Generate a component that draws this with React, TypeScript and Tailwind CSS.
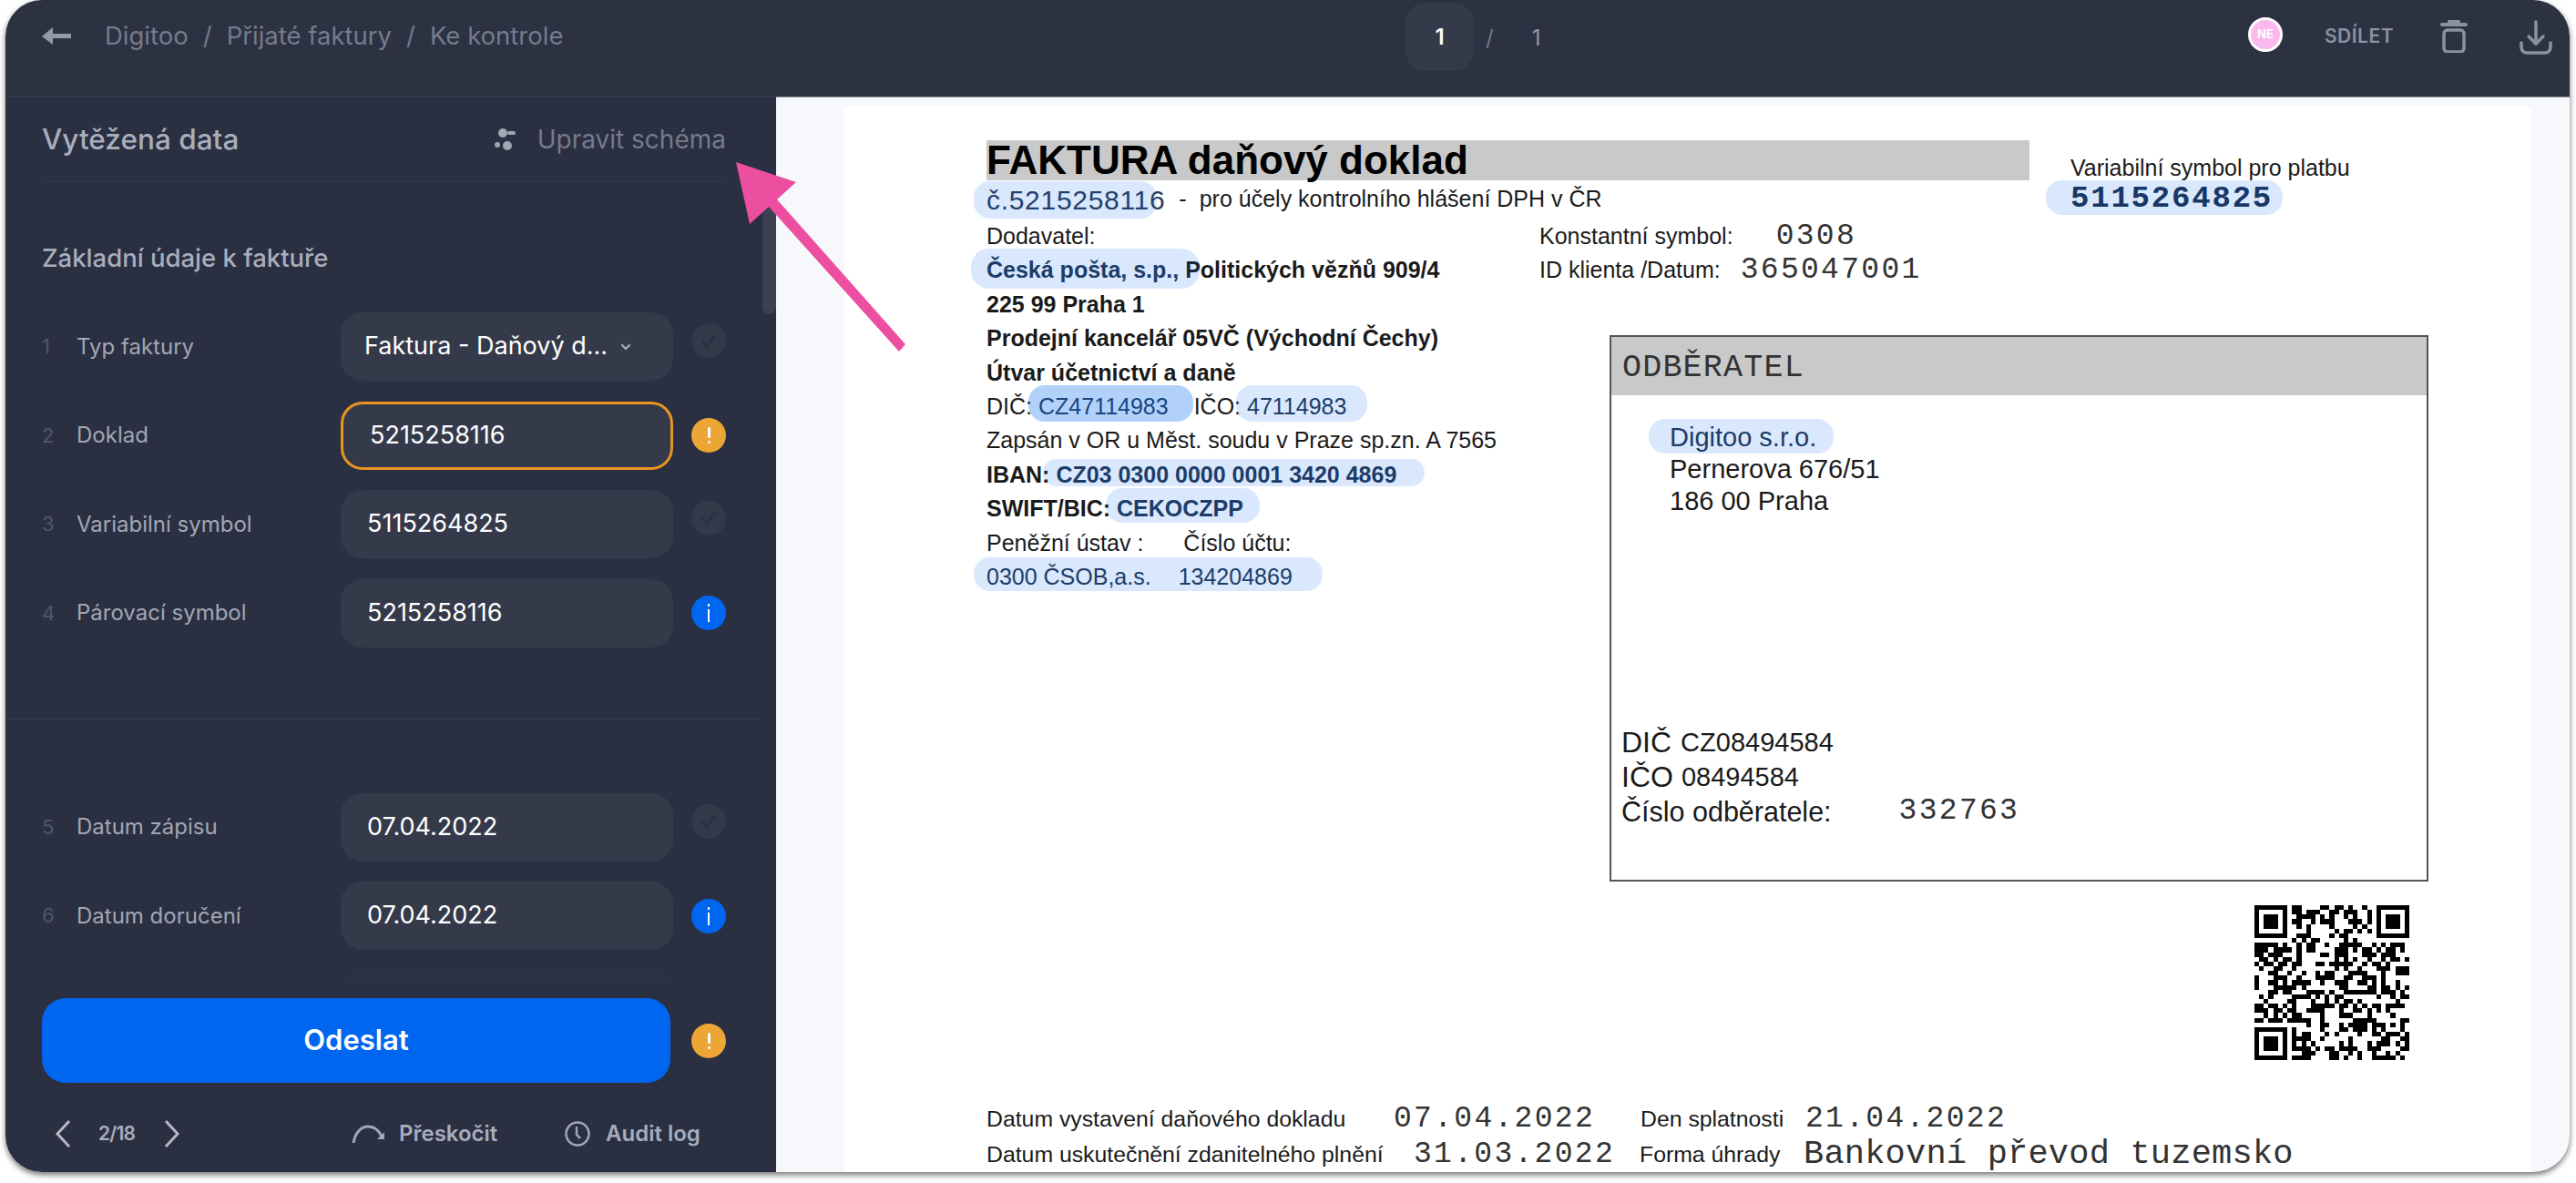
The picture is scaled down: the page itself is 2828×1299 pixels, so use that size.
import React from 'react';
import { ChevronDown } from 'lucide-react';

type Status = 'check' | 'warn' | 'info';

const rowsTop: { n: number; label: string; value: string; status: Status; select?: boolean; active?: boolean }[] = [
  { n: 1, label: 'Typ faktury', value: 'Faktura - Daňový d...', status: 'check', select: true },
  { n: 2, label: 'Doklad', value: '5215258116', status: 'warn', active: true },
  { n: 3, label: 'Variabilní symbol', value: '5115264825', status: 'check' },
  { n: 4, label: 'Párovací symbol', value: '5215258116', status: 'info' },
];

const rowsBottom: { n: number; label: string; value: string; status: Status }[] = [
  { n: 5, label: 'Datum zápisu', value: '07.04.2022', status: 'check' },
  { n: 6, label: 'Datum doručení', value: '07.04.2022', status: 'info' },
];

const StatusDot = ({ status }: { status: Status }) => {
  if (status === 'check') {
    return (
      <div className="w-[38px] h-[38px] mb-[13px] rounded-full bg-[#343949] flex items-center justify-center shrink-0">
        <svg width="22" height="22" viewBox="0 0 22 22" fill="none" stroke="#2a2f42" strokeWidth="3">
          <path d="M4 11l5 6 9-12" />
        </svg>
      </div>
    );
  }
  if (status === 'warn') {
    return (
      <div className="w-[38px] h-[38px] rounded-full bg-[#eda535] flex flex-col items-center justify-center gap-[3px] shrink-0">
        <div className="w-[3px] h-[12px] rounded-sm bg-white" />
        <div className="w-[3px] h-[3px] rounded-full bg-white" />
      </div>
    );
  }
  return (
    <div className="w-[38px] h-[38px] rounded-full bg-[#0066f0] flex flex-col items-center justify-center gap-[3px] shrink-0">
      <div className="w-[2px] h-[3px] bg-white" />
      <div className="w-[2px] h-[14px] bg-white" />
    </div>
  );
};

const FieldRow = ({ n, label, value, status, select, active }: { n: number; label: string; value: string; status: Status; select?: boolean; active?: boolean }) => (
  <div className="flex items-center h-[75px] pl-[40px]">
    <span className="w-[38px] text-[22px] text-[#515767]">{n}</span>
    <span className="w-[290px] text-[24px] text-[#a2a7b4]">{label}</span>
    <div className={`w-[365px] h-[75px] rounded-[24px] bg-[#353a4a] flex items-center text-[27px] text-white ${select ? 'pl-[26px]' : 'pl-[29px]'} ${active ? 'border-[3px] border-[#e8951f] pl-[26px]' : ''}`}>
      <span>{value}</span>
      {select && <ChevronDown size={16} strokeWidth={3.5} className="ml-[12px] text-[#a2a7b4]" />}
    </div>
    <div className="ml-[20px]">
      <StatusDot status={status} />
    </div>
  </div>
);

const HeaderBar = () => (
  <header className="h-[106px] bg-[#2c3242] border-b border-[#3a4050] flex items-start shrink-0">
    <div className="w-[1537px] h-[80px] pl-[40px] flex items-center text-[27.5px] text-[#747b8c]">
      <svg width="32" height="22" viewBox="0 0 32 22" fill="#9299a8">
        <path d="M0 11L12 1v7h20v5H12v7z" />
      </svg>
      <span className="ml-[37px]">Digitoo</span>
      <span className="mx-[16px]">/</span>
      <span>Přijaté faktury</span>
      <span className="mx-[16px]">/</span>
      <span>Ke kontrole</span>
    </div>
    <div className="mt-[3px] w-[75px] h-[75px] rounded-[22px] bg-[#353a4a] flex items-center justify-center text-[24px] font-semibold text-white">1</div>
    <span className="mt-[24px] ml-[13px] text-[24px] text-[#747b8c]">/</span>
    <span className="mt-[24px] ml-[42px] text-[24px] text-[#9299a8]">1</span>
    <div className="ml-auto mt-[19px] flex items-start pr-[19px]">
      <div className="w-[38px] h-[38px] rounded-full border-[3px] border-white bg-[#f9b8ee] flex items-center justify-center text-[13px] font-bold text-white">NE</div>
      <span className="ml-[46px] mt-[5px] text-[21px] font-semibold text-[#8a91a0] tracking-[0.5px]">SDÍLET</span>
      <svg className="ml-[50px] mt-[3px]" width="32" height="36" viewBox="0 0 32 36" fill="none">
        <rect x="9" y="0" width="14" height="4" rx="1.5" fill="#8a91a0" />
        <rect x="1" y="3" width="30" height="4" rx="2" fill="#8a91a0" />
        <rect x="5" y="11" width="22" height="24" rx="4" stroke="#8a91a0" strokeWidth="3.5" />
      </svg>
      <svg className="ml-[56px] mt-[3px]" width="36" height="38" viewBox="0 0 36 38" fill="none" stroke="#8a91a0" strokeWidth="3.5" strokeLinecap="round" strokeLinejoin="round">
        <path d="M18 2v24" />
        <path d="M10 18l8 8 8-8" />
        <path d="M2 25v5a6 6 0 0 0 6 6h20a6 6 0 0 0 6-6v-5" />
      </svg>
    </div>
  </header>
);

const Sidebar = () => (
  <aside className="w-[846px] h-full shrink-0 bg-[#2a2f42] flex flex-col font-['Inter',sans-serif]">
    <div className="ml-[40px] mr-[55px] h-[94px] border-b border-[#343949] flex items-center justify-between shrink-0">
      <h2 className="text-[31.5px] font-medium text-[#a9aeba]">Vytěžená data</h2>
      <div className="flex items-center text-[28px] text-[#747b8c]">
        <svg width="24" height="24" viewBox="0 0 24 24" fill="#a2a7b4">
          <circle cx="10" cy="5" r="5" />
          <rect x="15" y="3" width="9" height="4" rx="2" />
          <circle cx="15" cy="19" r="5" />
          <circle cx="4" cy="18" r="3" />
        </svg>
        <span className="ml-[24px]">Upravit schéma</span>
      </div>
    </div>
    <div className="relative flex-1 min-h-0 overflow-hidden">
      <h3 className="pl-[40px] pt-[65px] h-[143px] text-[27.5px] leading-[36px] font-medium text-[#a9aeba]">Základní údaje k faktuře</h3>
      <div className="flex flex-col gap-[22.5px]">
        {rowsTop.map(r => <FieldRow key={r.n} {...r} />)}
      </div>
      <div className="mt-[78px] mr-[15px] border-t border-[#353a4a]" />
      <div className="mt-[81px] flex flex-col gap-[22.5px]">
        {rowsBottom.map(r => <FieldRow key={r.n} {...r} />)}
        <div className="ml-[368px] w-[365px] h-[75px] rounded-[24px] bg-[#353a4a]" />
      </div>
      <div className="absolute right-0 top-[15px] w-[15px] h-[130px] rounded-b-lg bg-[#3b4152]" />
      <div className="absolute left-0 right-0 bottom-0 h-[34px] bg-gradient-to-b from-[#2a2f42]/70 to-[#2a2f42]" />
    </div>
    <div className="h-[200px] shrink-0 pl-[40px] pt-[9px]">
      <div className="flex items-center">
        <button className="w-[690px] h-[93px] rounded-[26px] bg-[#0066f0] text-[31px] font-semibold text-white">Odeslat</button>
        <div className="ml-[23px]">
          <StatusDot status="warn" />
        </div>
      </div>
      <div className="mt-[38px] flex items-center text-[24px] font-semibold text-[#a6adbd]">
        <svg className="ml-[14px]" width="18" height="32" viewBox="0 0 18 32" fill="none" stroke="#b5b9c3" strokeWidth="3">
          <path d="M16 2L3 16l13 14" />
        </svg>
        <span className="ml-[30px] w-[40px] text-[21px] tracking-[-0.8px]">2/18</span>
        <svg className="ml-[32px]" width="18" height="32" viewBox="0 0 18 32" fill="none" stroke="#b5b9c3" strokeWidth="3">
          <path d="M2 2l13 14L2 30" />
        </svg>
        <svg className="ml-[188px]" width="36" height="22" viewBox="0 0 36 22" fill="none" stroke="#a2a7b4" strokeWidth="3">
          <path d="M2 21C4 9 11 3 18 3c7 0 12 4 15 11" />
          <path d="M36 9v8h-8z" fill="#a2a7b4" stroke="none" />
        </svg>
        <span className="ml-[16px] w-[106px]">Přeskočit</span>
        <svg className="ml-[76px]" width="28" height="30" viewBox="0 0 28 30" fill="none" stroke="#a2a7b4" strokeWidth="2.5">
          <circle cx="14" cy="15" r="12.5" />
          <path d="M13 7v9l4 4" />
        </svg>
        <span className="ml-[17px]">Audit log</span>
      </div>
    </div>
  </aside>
);

// QR modules are just a stable noise, the finder squares are the part that reads as QR
const qrSize = 33;
const isFinder = (x: number, y: number) =>
  (x < 8 && y < 8) || (x >= qrSize - 8 && y < 8) || (x < 8 && y >= qrSize - 8);

const qrCells: [number, number][] = [];
let seed = 7321;
for (let y = 0; y < qrSize; y++) {
  for (let x = 0; x < qrSize; x++) {
    seed = (seed * 1103515245 + 12345) & 0x7fffffff;
    if (!isFinder(x, y) && (seed >> 16) % 100 < 50) qrCells.push([x, y]);
  }
}

const Finder = ({ x, y }: { x: number; y: number }) => (
  <>
    <rect x={x} y={y} width="7" height="7" />
    <rect x={x + 1} y={y + 1} width="5" height="5" fill="#fff" />
    <rect x={x + 2} y={y + 2} width="3" height="3" />
  </>
);

const QrCode = () => (
  <svg width="170" height="170" viewBox="0 0 33 33" fill="#000" shapeRendering="crispEdges">
    <Finder x={0} y={0} />
    <Finder x={26} y={0} />
    <Finder x={0} y={26} />
    {qrCells.map(([x, y]) => <rect key={`${x}-${y}`} x={x} y={y} width="1" height="1" />)}
  </svg>
);

const mono = "font-['Liberation_Mono',monospace] text-[#333] text-[33px] tracking-[2.3px]";

const InvoicePage = () => (
  <div className="relative w-[1852px] h-full overflow-hidden bg-white pl-[156px] pt-[37px] font-['Liberation_Sans',Arial,sans-serif] text-[#1a1a1a]">
    <div className="flex">
      <div className="w-[1145px] h-[44px] bg-[#c9c9c9] text-[44px] leading-[44px] font-bold text-black">FAKTURA daňový doklad</div>
      <div className="ml-[45px] pt-[15px]">
        <div className="text-[25px] leading-[30px]">Variabilní symbol pro platbu</div>
        <div className="font-['Liberation_Mono',monospace] text-[34px] tracking-[1.8px] leading-[38px] font-bold text-[#1d2f4c]">5115264825</div>
      </div>
    </div>
    <div className="-mt-[38px] flex items-center h-[42px] pb-[2px]">
      <span className="text-[30px] tracking-[0.7px] text-[#2a3a55]">č.5215258116</span>
      <span className="ml-[15px] text-[25px]">-</span>
      <span className="ml-[14px] text-[25px]">pro účely kontrolního hlášení DPH v ČR</span>
    </div>
    <div className="flex">
      <div className="w-[607px] shrink-0 text-[25px] leading-[37.4px]">
        <div>Dodavatel:</div>
        <div className="font-bold"><span className="text-[#24364f]">Česká pošta, s.p.,</span> Politických vězňů 909/4</div>
        <div className="font-bold">225 99 Praha 1</div>
        <div className="font-bold">Prodejní kancelář 05VČ (Východní Čechy)</div>
        <div className="font-bold">Útvar účetnictví a daně</div>
        <div>DIČ: <span className="text-[#24364f]">CZ47114983</span><span className="ml-[28px]">IČO:</span> <span className="text-[#24364f]">47114983</span></div>
        <div>Zapsán v OR u Měst. soudu v Praze sp.zn. A 7565</div>
        <div className="font-bold">IBAN: <span className="text-[#24364f]">CZ03 0300 0000 0001 3420 4869</span></div>
        <div className="font-bold">SWIFT/BIC: <span className="text-[#24364f]">CEKOCZPP</span></div>
        <div className="flex"><span>Peněžní ústav :</span><span className="ml-[44px]">Číslo účtu:</span></div>
        <div className="flex text-[#24364f]"><span>0300 ČSOB,a.s.</span><span className="ml-[30px]">134204869</span></div>
      </div>
      <div>
        <div className="flex items-center h-[37px] text-[25px]">
          <span>Konstantní symbol:</span>
          <span className={`${mono} ml-[47px]`}>0308</span>
        </div>
        <div className="flex items-center h-[37px] text-[25px]">
          <span>ID klienta /Datum:</span>
          <span className={`${mono} ml-[22px]`}>365047001</span>
        </div>
        <div className="ml-[77px] mt-[53px] w-[899px] h-[600px] border-2 border-[#555] flex flex-col">
          <div className="font-['Liberation_Mono',monospace] h-[64px] bg-[#c9c9c9] pl-[12px] pt-[4px] flex items-center text-[35px] tracking-[1.2px] text-[#333]">ODBĚRATEL</div>
          <div className="pl-[64px] pt-[29px] text-[29px] leading-[35px]">
            <div className="text-[#24364f]">Digitoo s.r.o.</div>
            <div>Pernerova 676/51</div>
            <div>186 00 Praha</div>
          </div>
          <div className="pl-[11px] mt-[228px] leading-[38px]">
            <div className="flex items-center"><span className="text-[32px]">DIČ</span><span className="ml-[10px] text-[29px]">CZ08494584</span></div>
            <div className="flex items-center"><span className="text-[32px]">IČO</span><span className="ml-[9px] text-[29px]">08494584</span></div>
            <div className="flex items-center"><span className="text-[30.5px]">Číslo odběratele:</span><span className={`${mono} ml-[74px]`}>332763</span></div>
          </div>
        </div>
      </div>
    </div>
    <div className="flex justify-end pr-[134px] mt-[26px]">
      <QrCode />
    </div>
    <div className="mt-[45px] text-[24.8px]">
      <div className="flex items-center h-[39px]">
        <span className="w-[447px]">Datum vystavení daňového dokladu</span>
        <span className={`${mono} w-[271px]`}>07.04.2022</span>
        <span className="w-[181px]">Den splatnosti</span>
        <span className={mono}>21.04.2022</span>
      </div>
      <div className="flex items-center h-[39px]">
        <span className="w-[469px]">Datum uskutečnění zdanitelného plnění</span>
        <span className={`${mono} w-[248px]`}>31.03.2022</span>
        <span className="w-[180px]">Forma úhrady</span>
        <span className="font-['Liberation_Mono',monospace] text-[37px] tracking-[0.2px] text-[#333]">Bankovní převod tuzemsko</span>
      </div>
    </div>
    {/* highlights laid over the scanned document */}
    <div className="absolute left-[142px] top-[82px] w-[201px] h-[41px] rounded-[18px] bg-[#0066f0]/15" />
    <div className="absolute left-[139px] top-[156px] w-[251px] h-[44px] rounded-[20px] bg-[#0066f0]/15" />
    <div className="absolute left-[202px] top-[306px] w-[181px] h-[40px] rounded-[18px] bg-[#0066f0]/30" />
    <div className="absolute left-[430px] top-[306px] w-[144px] h-[40px] rounded-[18px] bg-[#0066f0]/15" />
    <div className="absolute left-[218px] top-[387px] w-[419px] h-[30px] rounded-[15px] bg-[#0066f0]/15" />
    <div className="absolute left-[287px] top-[419px] w-[169px] h-[38px] rounded-[18px] bg-[#0066f0]/15" />
    <div className="absolute left-[142px] top-[495px] w-[383px] h-[37px] rounded-[18px] bg-[#0066f0]/15" />
    <div className="absolute left-[1319px] top-[81px] w-[260px] h-[38px] rounded-[18px] bg-[#0066f0]/15" />
    <div className="absolute left-[883px] top-[343px] w-[203px] h-[38px] rounded-[18px] bg-[#0066f0]/15" />
  </div>
);

export default function App() {
  return (
    <div className="relative w-[2828px] h-[1299px] bg-white overflow-hidden">
      <div className="ml-[6px] w-[2815px] h-[1287px] rounded-[40px] overflow-hidden bg-[#f7f8fc] shadow-[0_3px_6px_rgba(0,0,0,0.55)] flex flex-col font-['Inter',sans-serif]">
        <HeaderBar />
        <div className="flex flex-1 min-h-0">
          <Sidebar />
          <main className="flex-1 min-w-0 pl-[75px] pt-[11px] shadow-[inset_0_1px_0_#7d828c]">
            <InvoicePage />
          </main>
        </div>
      </div>
      {/* pink annotation arrow */}
      <svg className="absolute left-0 top-0 pointer-events-none" width="1100" height="420" viewBox="0 0 1100 420" fill="none">
        <path d="M808 178L874 200 853 219 994 378 987 386 844 227 823 246Z" fill="#ec4f9f" />
      </svg>
    </div>
  );
}
